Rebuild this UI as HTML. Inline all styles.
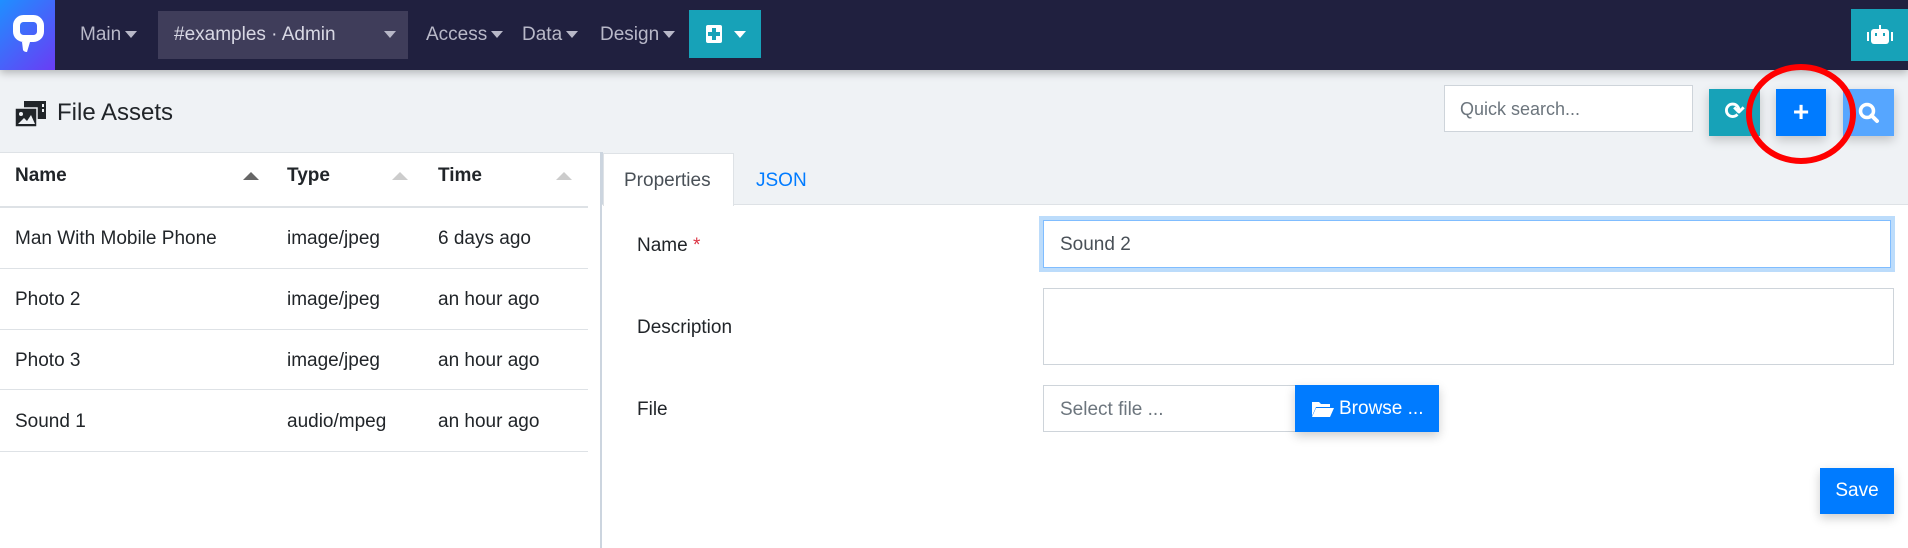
<!DOCTYPE html>
<html><head><meta charset="utf-8"><style>
*{box-sizing:border-box;margin:0;padding:0}
body{width:1908px;height:548px;overflow:hidden;background:#eff2f5;font-family:"Liberation Sans",sans-serif;color:#212529;position:relative}
.a{position:absolute}
.nav{left:0;top:0;width:1908px;height:70px;background:#20203f;box-shadow:0 3px 8px rgba(0,0,0,.25)}
.nt{color:#b8b8c8;font-size:19px;top:24px}
.car{display:inline-block;width:0;height:0;border-left:6px solid transparent;border-right:6px solid transparent;border-top:7px solid #b8b8c8;vertical-align:middle;margin-left:4px}
.th{font-weight:bold;font-size:19px;top:165px}
.arr{width:0;height:0;border-left:8px solid transparent;border-right:8px solid transparent;border-bottom:8px solid #ccc;top:172px}
.td{font-size:19px}
.hl{height:1px;background:#dee2e6;left:0;width:588px}
.lbl{font-size:19px;left:637px}
.btn{box-shadow:0 4px 10px rgba(0,0,0,.2);color:#fff}
</style></head><body>
<div class="a nav"></div>
<div class="a" style="left:0;top:0;width:55px;height:70px;background:linear-gradient(135deg,#1f8fff,#6a3cf5)"></div>
<svg class="a" style="left:0;top:0" width="55" height="70"><rect x="16.5" y="18.5" width="24" height="20" rx="7" fill="none" stroke="#fff" stroke-width="7"/><path d="M22 42 H30 L27 52 Q24 52 23 50Z" fill="#fff"/></svg>
<div class="a nt" style="left:80px">Main<span class="car"></span></div>
<div class="a" style="left:158px;top:11px;width:250px;height:48px;background:#3f3d5a"></div>
<div class="a nt" style="left:174px;color:#d8d8e4">#examples · Admin</div>
<div class="a car" style="left:380px;top:31px"></div>
<div class="a nt" style="left:426px">Access<span class="car"></span></div>
<div class="a nt" style="left:522px">Data<span class="car"></span></div>
<div class="a nt" style="left:600px">Design<span class="car"></span></div>
<div class="a" style="left:689px;top:10px;width:72px;height:48px;background:#17a2b8"></div>
<div class="a" style="left:706px;top:25px;width:16px;height:18px;background:#fff;border-radius:2px"></div>
<div class="a" style="left:712px;top:28px;width:4px;height:12px;background:#17a2b8"></div>
<div class="a" style="left:708px;top:32px;width:12px;height:4px;background:#17a2b8"></div>
<div class="a car" style="left:730px;top:31px;border-top-color:#fff"></div>
<div class="a" style="left:1851px;top:9px;width:57px;height:52px;background:#17a2b8"></div>
<div class="a" style="left:1871px;top:29px;width:18px;height:15px;background:#fff;border-radius:3px"></div>
<div class="a" style="left:1867px;top:32px;width:2px;height:9px;background:#fff"></div>
<div class="a" style="left:1891px;top:32px;width:2px;height:9px;background:#fff"></div>
<div class="a" style="left:1879px;top:25px;width:2px;height:4px;background:#fff"></div>
<div class="a" style="left:1875px;top:33px;width:2px;height:3px;background:#17a2b8"></div>
<div class="a" style="left:1883px;top:33px;width:2px;height:3px;background:#17a2b8"></div>

<svg class="a" style="left:15px;top:101px" width="32" height="26" viewBox="0 0 32 26"><rect x="9" y="0" width="22" height="18" fill="#212529"/><rect x="27" y="3" width="2" height="3" fill="#eff2f5"/><rect x="27" y="8" width="2" height="3" fill="#eff2f5"/><rect x="0" y="7" width="22" height="19" fill="#212529" stroke="#eff2f5" stroke-width="1.5"/><circle cx="6" cy="13" r="2" fill="#eff2f5"/><path d="M3 23 L9 17 L12 20 L16 14 L20 23Z" fill="#eff2f5"/></svg>
<div class="a" style="left:57px;top:99px;font-size:24px">File Assets</div>

<div class="a" style="left:1444px;top:85px;width:249px;height:47px;background:#fff;border:1px solid #ced4da"></div>
<div class="a" style="left:1460px;top:99px;font-size:18px;color:#6c757d">Quick search...</div>
<div class="a btn" style="left:1709px;top:89px;width:51px;height:47px;background:#17a2b8;font-size:24px;text-align:center;line-height:46px;font-weight:bold">⟳</div>
<div class="a btn" style="left:1776px;top:89px;width:50px;height:47px;background:#007bff;font-size:28px;text-align:center;line-height:45px;font-weight:bold">+</div>
<div class="a btn" style="left:1843px;top:89px;width:51px;height:47px;background:#56a6ff"></div>
<svg class="a" style="left:1857px;top:101px" width="24" height="24"><circle cx="10" cy="10" r="6.5" fill="none" stroke="#fff" stroke-width="3.5"/><path d="M14.5 14.5 L20 20" stroke="#fff" stroke-width="4" stroke-linecap="round"/></svg>
<svg class="a" style="left:1740px;top:58px" width="124" height="112"><ellipse cx="61" cy="56" rx="52" ry="47" fill="none" stroke="#f00" stroke-width="6"/></svg>

<div class="a" style="left:0;top:152px;width:600px;height:396px;background:#fff"></div>
<div class="a" style="left:0;top:152px;width:600px;height:1px;background:#dee2e6"></div>
<div class="a th" style="left:15px">Name</div>
<div class="a arr" style="left:243px;border-bottom-color:#666"></div>
<div class="a th" style="left:287px">Type</div>
<div class="a arr" style="left:392px"></div>
<div class="a th" style="left:438px">Time</div>
<div class="a arr" style="left:556px"></div>
<div class="a" style="left:0;top:206px;width:588px;height:2px;background:#dee2e6"></div>
<div class="a td" style="left:15px;top:228px">Man With Mobile Phone</div><div class="a td" style="left:287px;top:228px">image/jpeg</div><div class="a td" style="left:438px;top:228px">6 days ago</div>
<div class="a hl" style="top:268px"></div>
<div class="a td" style="left:15px;top:289px">Photo 2</div><div class="a td" style="left:287px;top:289px">image/jpeg</div><div class="a td" style="left:438px;top:289px">an hour ago</div>
<div class="a hl" style="top:329px"></div>
<div class="a td" style="left:15px;top:350px">Photo 3</div><div class="a td" style="left:287px;top:350px">image/jpeg</div><div class="a td" style="left:438px;top:350px">an hour ago</div>
<div class="a hl" style="top:389px"></div>
<div class="a td" style="left:15px;top:411px">Sound 1</div><div class="a td" style="left:287px;top:411px">audio/mpeg</div><div class="a td" style="left:438px;top:411px">an hour ago</div>
<div class="a hl" style="top:451px"></div>
<div class="a" style="left:600px;top:152px;width:3px;height:396px;background:#ccd5df"></div>

<div class="a" style="left:602px;top:205px;width:1306px;height:343px;background:#fff"></div>
<div class="a" style="left:602px;top:204px;width:1306px;height:1px;background:#dee2e6"></div>
<div class="a" style="left:603px;top:153px;width:131px;height:53px;background:#fff;border:1px solid #dee2e6;border-bottom:none"></div>
<div class="a" style="left:624px;top:170px;font-size:19px;color:#495057">Properties</div>
<div class="a" style="left:756px;top:170px;font-size:19px;color:#007bff">JSON</div>
<div class="a lbl" style="top:235px">Name <span style="color:#dc3545">*</span></div>
<div class="a" style="left:1039px;top:216px;width:856px;height:56px;background:#bcdcfb"></div>
<div class="a" style="left:1043px;top:220px;width:848px;height:48px;background:#fff;border:1px solid #80bdff"></div>
<div class="a" style="left:1060px;top:234px;font-size:19px;color:#495057">Sound 2</div>
<div class="a lbl" style="top:317px">Description</div>
<div class="a" style="left:1043px;top:288px;width:851px;height:77px;border:1px solid #ced4da"></div>
<div class="a lbl" style="top:399px">File</div>
<div class="a" style="left:1043px;top:385px;width:253px;height:47px;border:1px solid #ced4da"></div>
<div class="a" style="left:1060px;top:399px;font-size:19px;color:#6c757d">Select file ...</div>
<div class="a btn" style="left:1295px;top:385px;width:144px;height:47px;background:#007bff"></div>
<svg class="a" style="left:1311px;top:400px" width="24" height="18"><path d="M1 2 H8 L10 4 H19 V7 H5 L1 16Z M5 8 H23 L19 17 H1Z" fill="#fff"/></svg>
<div class="a" style="left:1339px;top:398px;font-size:19px;color:#fff">Browse ...</div>
<div class="a btn" style="left:1820px;top:468px;width:74px;height:46px;background:#007bff;font-size:19px;text-align:center;line-height:46px">Save</div>
</body></html>
